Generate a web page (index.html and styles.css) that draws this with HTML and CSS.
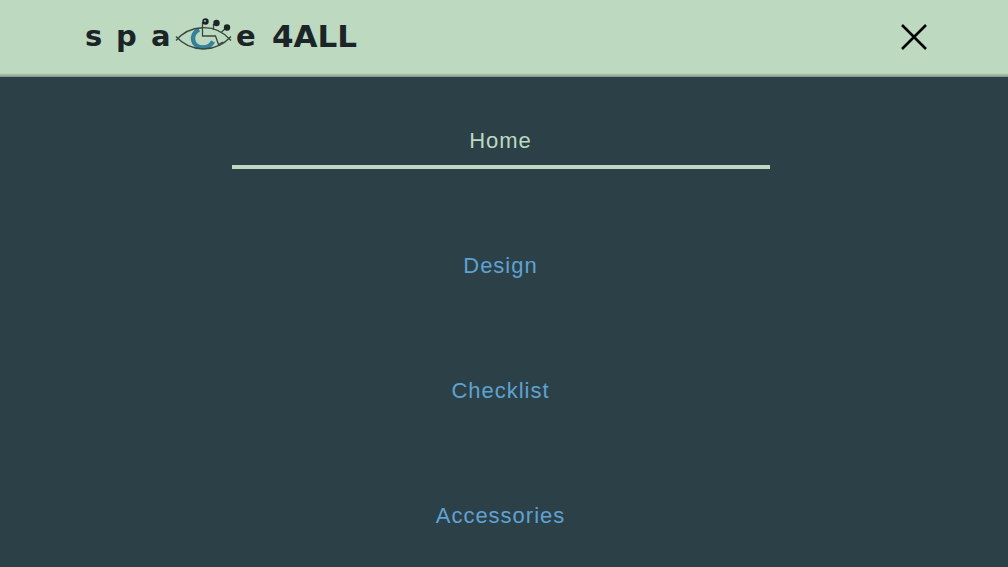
FILE: index.html
```html
<!DOCTYPE html>
<html lang="en">
<head>
<meta charset="utf-8">
<meta name="viewport" content="width=device-width, initial-scale=1">
<title>space 4ALL</title>
<link rel="stylesheet" href="styles.css">
</head>
<body>
<header class="header">
  <a class="logo" href="#" aria-label="space 4ALL">
    <svg class="logo-art" width="280" height="40" viewBox="84 14 280 40">
      <g class="wordmark">
        <text x="85" y="46">s</text>
        <text x="116" y="46">p</text>
        <text x="151" y="46">a</text>
        <text x="236" y="46">e</text>
        <text class="wordmark-large" x="272" y="47">4ALL</text>
      </g>
      <path d="M199 29.500C190 34 191 47 203 47.500C208 47.500 211 45 213 41.500" fill="none" stroke="#35809a" stroke-width="4.500"/>
      <g fill="none" stroke="#37483f" stroke-width="1.300">
        <path d="M176 40.500C189 25 215 22 231 40.500M176 36.500C190 52 215 54 231 36.500"/>
        <path d="M202.500 22V36H215.500L218.500 44.500L223 42M213.500 30V24M221.500 32L226 28"/>
      </g>
      <g fill="#1b2426">
        <circle cx="205.500" cy="21.500" r="3.200"/>
        <circle cx="216.500" cy="23" r="3.200"/>
        <circle cx="227" cy="27.500" r="3.200"/>
      </g>
      <circle cx="205" cy="21" r="1" fill="#a9c2ad"/>
    </svg>
  </a>
  <button class="close" type="button" aria-label="Close menu">
    <svg width="28" height="28" viewBox="0 0 28 28"><path d="M2 2L26 26M26 2L2 26" stroke="#000" stroke-width="2.600"/></svg>
  </button>
</header>
<nav class="menu" aria-label="Main">
  <a class="item current" href="#" aria-current="page">Home</a>
  <a class="item" href="#">Design</a>
  <a class="item" href="#">Checklist</a>
  <a class="item" href="#">Accessories</a>
</nav>
</body>
</html>
```
FILE: styles.css
```css
* { box-sizing: border-box; }
body {
  margin: 0;
  min-height: 100vh;
  display: flex;
  flex-direction: column;
  background: #2b4147;
  font-family: "Liberation Sans", Arial, sans-serif;
}
.header {
  display: flex;
  justify-content: space-between;
  align-items: flex-start;
  padding: 14px 80px 23px 84px;
  background: linear-gradient(to top, #7f9586, #bdd9c0 4px);
}
.logo, .logo-art { display: block; }
.wordmark {
  font: bold 29px "DejaVu Sans", sans-serif;
  fill: #1b2426;
}
.wordmark-large { font-size: 31px; }
.close {
  display: flex;
  margin: 9px 0 0;
  padding: 0;
  border: 0;
  background: none;
  cursor: pointer;
}
.menu {
  flex: 1;
  display: flex;
  flex-direction: column;
  align-items: center;
  gap: 76px;
  padding: 43px 7px 0 0;
}
.item {
  width: 100%;
  max-width: 538px;
  padding: 8px 0 12px;
  border-bottom: 4px solid transparent;
  color: #60a1d2;
  font-size: 22px;
  line-height: 25px;
  letter-spacing: 1px;
  text-align: center;
  text-decoration: none;
}
.current {
  color: #bdd9c0;
  border-color: #bdd9c0;
}
```
